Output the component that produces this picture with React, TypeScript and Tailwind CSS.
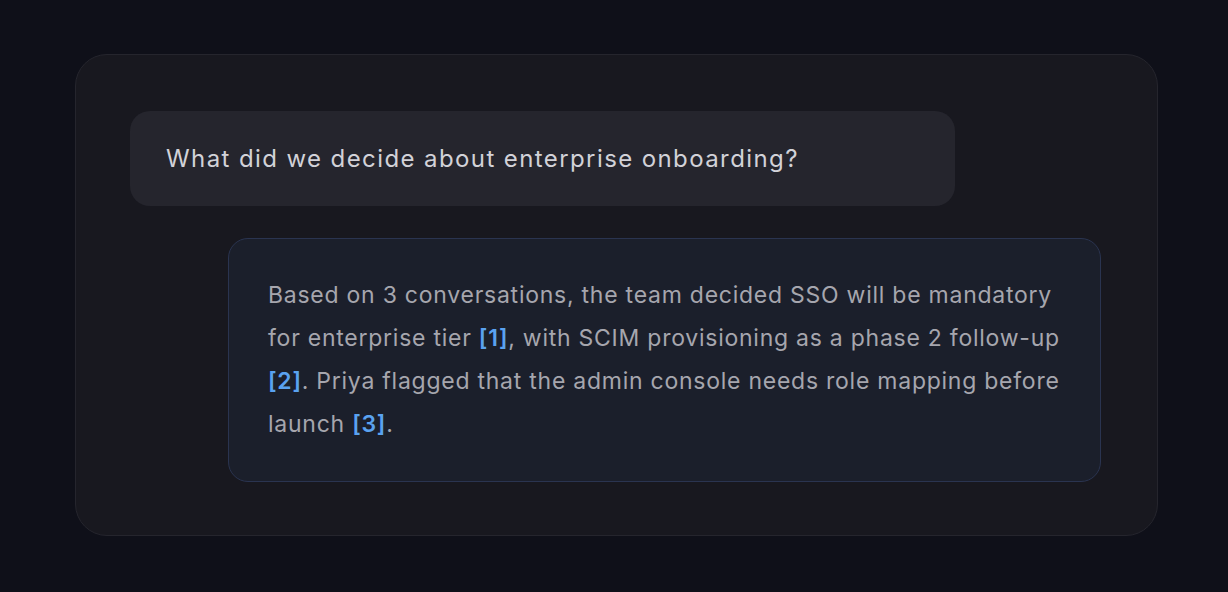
export default function App() {
  const cite = "font-semibold text-[#5aa2f0]";
  return (
    <div className="w-[1228px] h-[592px] bg-[#0f1019] flex items-start justify-start pt-[54px] pl-[75px]" style={{ fontFamily: "Inter, 'Noto Sans', sans-serif" }}>
      <div className="w-[1083px] h-[482px] rounded-[32px] bg-[#18181f] border border-[#25252d] px-[54px] pt-[56px] flex flex-col gap-[32px]">
        <div className="w-[825px] h-[95px] rounded-[20px] bg-[#25252d] flex items-center pl-[36px] text-[24px] tracking-[1.4px] text-[#d2d2d8]">
          What did we decide about enterprise onboarding?
        </div>
        <div className="ml-[98px] w-[873px] h-[244px] rounded-[20px] bg-[#1b1f2b] border border-[#2a3450] pl-[39px] pt-[35px] text-[23px] tracking-[0.75px] leading-[43px] text-[#a6a6ae] whitespace-nowrap">
          Based on 3 conversations, the team decided SSO will be mandatory
          <br />
          for enterprise tier <span className={cite}>[1]</span>, with SCIM provisioning as a phase 2 follow-up
          <br />
          <span className={cite}>[2]</span>. Priya flagged that the admin console needs role mapping before
          <br />
          launch <span className={cite}>[3]</span>.
        </div>
      </div>
    </div>
  );
}
